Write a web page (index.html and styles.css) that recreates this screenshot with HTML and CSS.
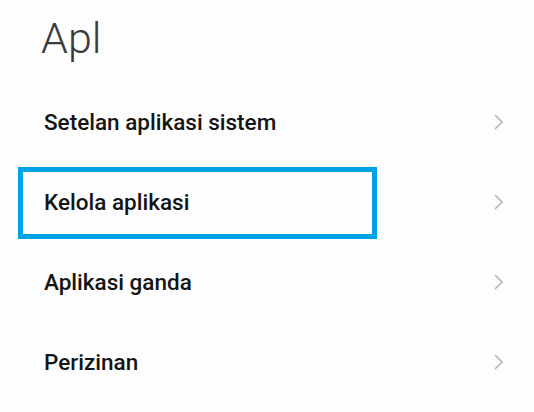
FILE: index.html
```html
<!DOCTYPE html>
<html lang="id">
<head>
<meta charset="utf-8">
<link rel="stylesheet" href="styles.css">
</head>
<body>
<div class="screen">
  <h1 class="title">Apl</h1>
  <ul class="list">
    <li class="row"><span class="label">Setelan aplikasi sistem</span><svg class="chev" viewBox="0 0 9 16"><path d="M1 1 L8 8 L1 15"/></svg></li>
    <li class="row highlighted"><span class="label">Kelola aplikasi</span><svg class="chev" viewBox="0 0 9 16"><path d="M1 1 L8 8 L1 15"/></svg></li>
    <li class="row"><span class="label">Aplikasi ganda</span><svg class="chev" viewBox="0 0 9 16"><path d="M1 1 L8 8 L1 15"/></svg></li>
    <li class="row"><span class="label">Perizinan</span><svg class="chev" viewBox="0 0 9 16"><path d="M1 1 L8 8 L1 15"/></svg></li>
  </ul>
</div>
</body>
</html>
```
FILE: styles.css
```css
html, body {
  margin: 0;
  padding: 0;
  background: #fdfdfd;
}
.screen {
  width: 534px;
  height: 412px;
  overflow: hidden;
  font-family: Roboto, "Noto Sans", sans-serif;
}
.title {
  margin: 0;
  padding: 13px 0 0 41px;
  font-size: 43px;
  line-height: 50px;
  font-weight: 300;
  color: #3a3a3a;
}
.list {
  list-style: none;
  margin: 19px 0 0 0;
  padding: 0;
}
.row {
  position: relative;
  height: 80px;
  display: flex;
  align-items: center;
  justify-content: space-between;
  padding: 0 31px 0 44px;
}
.label {
  font-size: 22.5px;
  font-weight: 500;
  color: #151515;
}
.chev {
  width: 9px;
  height: 16px;
  fill: none;
  stroke: #b5b5b5;
  stroke-width: 1.6;
}
.highlighted::before {
  content: "";
  position: absolute;
  left: 18px;
  top: 5px;
  width: 359px;
  height: 72px;
  box-sizing: border-box;
  border: 5px solid #00a3e6;
}
```
